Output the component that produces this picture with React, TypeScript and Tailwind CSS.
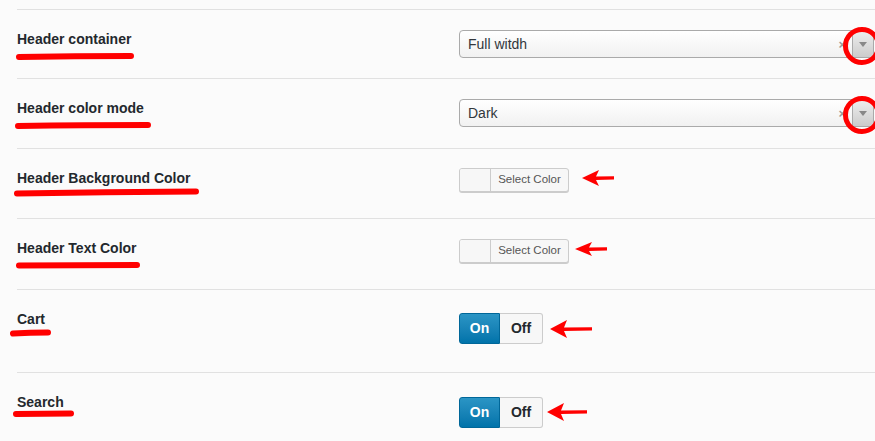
import React from "react";

// Settings rows from a WP theme options page, with red annotation marks on top

const Select = ({ value }: { value: string }) => (
  <div className="flex h-[28px] w-[415px] items-center rounded-[4px] border border-[#aaaaaa] bg-gradient-to-b from-white to-[#f1f1f1] text-[14px] text-[#32373c]">
    <span className="flex-1 pl-[8px]">{value}</span>
    <span className="mr-[6px] text-[13px] font-bold leading-none text-[#999]">×</span>
    <span className="flex h-full w-[21px] items-center justify-center rounded-r-[4px] border-l border-[#aaa] bg-gradient-to-b from-[#eee] to-[#ccc]">
      <svg width="8" height="5" viewBox="0 0 8 5">
        <path d="M0 0 L8 0 L4 5 Z" fill="#888" />
      </svg>
    </span>
  </div>
);

const ColorButton = () => (
  <div className="flex h-[24px] w-[110px] overflow-hidden rounded-[3px] border border-[#cccccc] bg-[#f7f7f7] shadow-[0_1px_0_#ccc]">
    <span className="w-[31px] border-r border-[#cccccc] bg-[#f7f7f7]" />
    <span className="flex flex-1 items-center justify-center text-[11.5px] text-[#555]">Select Color</span>
  </div>
);

const Toggle = () => (
  <div className="flex h-[31px] w-[84px] text-[14px] font-bold">
    <span className="flex w-[41px] items-center justify-center rounded-l-[3px] border border-[#006799] bg-gradient-to-b from-[#2a95c5] to-[#0073aa] text-white">
      On
    </span>
    <span className="flex flex-1 items-center justify-center rounded-r-[3px] border border-l-0 border-[#cccccc] bg-[#f7f7f7] text-[#23282d]">
      Off
    </span>
  </div>
);

type Row = { label: string; h: string; pad: string; control: React.ReactNode };

const rows: Row[] = [
  { label: "Header container", h: "h-[69px]", pad: "pt-[20px]", control: <Select value="Full witdh" /> },
  { label: "Header color mode", h: "h-[70px]", pad: "pt-[20px]", control: <Select value="Dark" /> },
  { label: "Header Background Color", h: "h-[70px]", pad: "pt-[19px]", control: <ColorButton /> },
  { label: "Header Text Color", h: "h-[71px]", pad: "pt-[20px]", control: <ColorButton /> },
  { label: "Cart", h: "h-[83px]", pad: "pt-[23px]", control: <Toggle /> },
  { label: "Search", h: "h-[83px]", pad: "pt-[24px]", control: <Toggle /> },
];

const arrow = (x: number, y: number, len: number, hh: number) =>
  `M${x} ${y} L${x + 17} ${y - hh} L${x + 14} ${y - 1.6} L${x + len} ${y - 1.8} L${x + len} ${y + 1.4} L${x + 14} ${y + 2} L${x + 17} ${y + hh} Z`;

export default function App() {
  return (
    <div className="relative h-[441px] w-[875px] overflow-hidden bg-[#fbfbfb] font-['Liberation_Sans',Arial,sans-serif]">
      <div className="pl-[17px] pt-[9px]">
        {rows.map((r) => (
          <div key={r.label} className={`flex border-t border-[#e1e1e1] ${r.h}`}>
            <div className="w-[442px] pt-[20px] text-[14px] font-bold leading-[18px] text-[#23282d]">
              {r.label}
            </div>
            <div className={r.pad}>{r.control}</div>
          </div>
        ))}
      </div>

      {/* annotations */}
      <svg className="pointer-events-none absolute left-0 top-0" width="875" height="441">
        <g stroke="#ff0000" strokeWidth="6" strokeLinecap="round" fill="none">
          <path d="M19 57 Q75 56 131 56" />
          <path d="M18 126 Q85 125 148 125" />
          <path d="M17 193.5 Q105 192 196 191.5" />
          <path d="M19 265.5 Q80 265 137 265" />
          <path d="M13 333.5 Q30 332.5 48 332.5" />
          <path d="M16 414 Q45 413.5 71 413.5" />
        </g>
        <g stroke="#ff0000" strokeWidth="5" fill="none">
          <circle cx="862" cy="46" r="16.5" />
          <circle cx="862" cy="115" r="16.5" />
        </g>
        <g fill="#ff0000">
          <path d={arrow(582, 178, 32, 8)} />
          <path d={arrow(575, 249, 32, 7)} />
          <path d={arrow(550, 329, 42, 9)} />
          <path d={arrow(547, 412, 40, 9)} />
        </g>
      </svg>
    </div>
  );
}
